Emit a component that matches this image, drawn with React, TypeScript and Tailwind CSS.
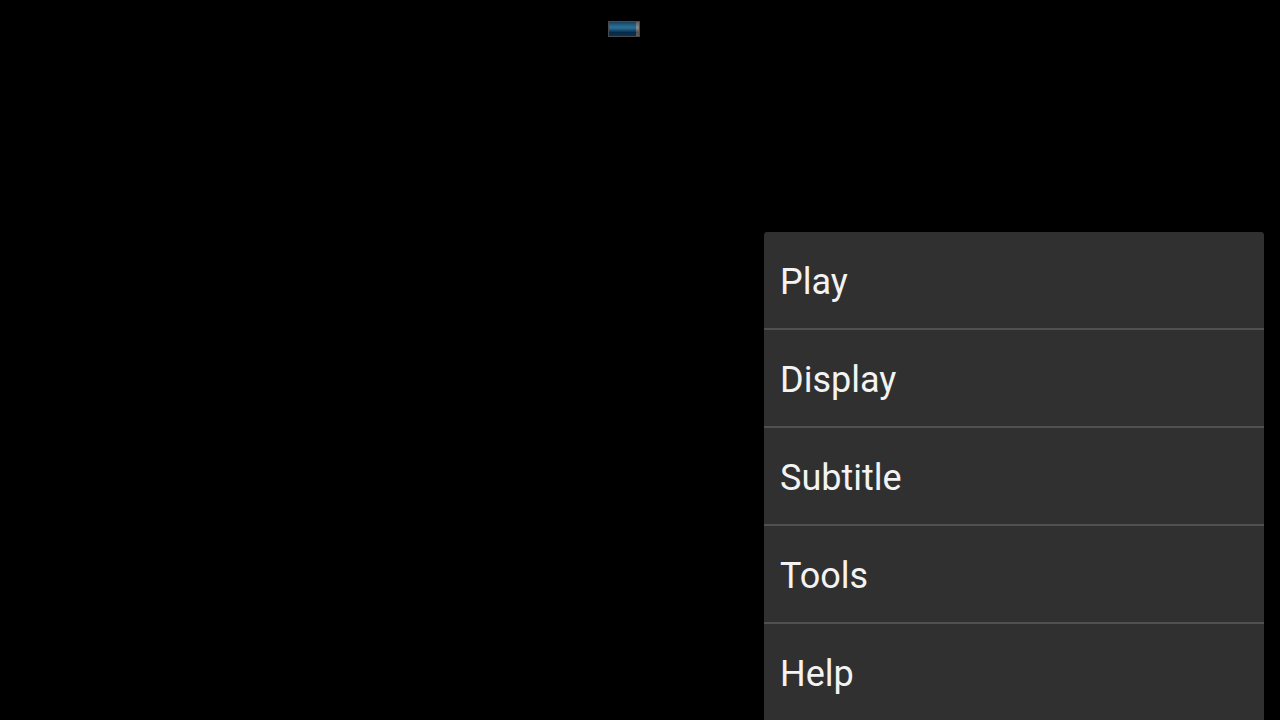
const menuItems = ["Play", "Display", "Subtitle", "Tools", "Help"];

function BatteryIndicator() {
  return (
    <svg
      role="img"
      aria-label="Battery"
      className="h-4 w-8"
      viewBox="0 0 32 16"
      shapeRendering="crispEdges"
    >
      <defs>
        <linearGradient id="charge" x1="0" y1="0" x2="0" y2="1">
          <stop offset="0" stopColor="#16425f" />
          <stop offset="0.25" stopColor="#24638a" />
          <stop offset="0.42" stopColor="#2c7096" />
          <stop offset="0.6" stopColor="#174a6d" />
          <stop offset="0.75" stopColor="#052a4a" />
          <stop offset="1" stopColor="#0a3350" />
        </linearGradient>
        <linearGradient id="cap" x1="0" y1="0" x2="0" y2="1">
          <stop offset="0" stopColor="#606060" />
          <stop offset="0.4" stopColor="#8a8a8a" />
          <stop offset="0.75" stopColor="#505050" />
          <stop offset="1" stopColor="#606060" />
        </linearGradient>
      </defs>
      <rect width="32" height="16" fill="#4a4a4a" />
      <rect x="1" y="1" width="27" height="14" fill="url(#charge)" />
      <rect x="28" y="1" width="3" height="14" fill="url(#cap)" />
    </svg>
  );
}

function OptionsMenu() {
  return (
    <nav
      aria-label="Options"
      className="w-full max-w-[500px] divide-y-2 divide-[#505050] overflow-hidden rounded-t-[3px] bg-[#303030]"
    >
      {menuItems.map((item) => (
        <div key={item}>
          <button
            type="button"
            className="block w-full px-4 pt-7 pb-6 text-left text-4xl leading-[44px] text-[#f3f3f3]"
          >
            {item}
          </button>
        </div>
      ))}
    </nav>
  );
}

export default function App() {
  return (
    <main className="flex h-screen flex-col overflow-hidden bg-black font-['Roboto',sans-serif]">
      <header className="flex flex-1 items-start justify-center pt-[21px] pr-8">
        <BatteryIndicator />
      </header>
      <div className="flex justify-end px-4">
        <OptionsMenu />
      </div>
    </main>
  );
}
